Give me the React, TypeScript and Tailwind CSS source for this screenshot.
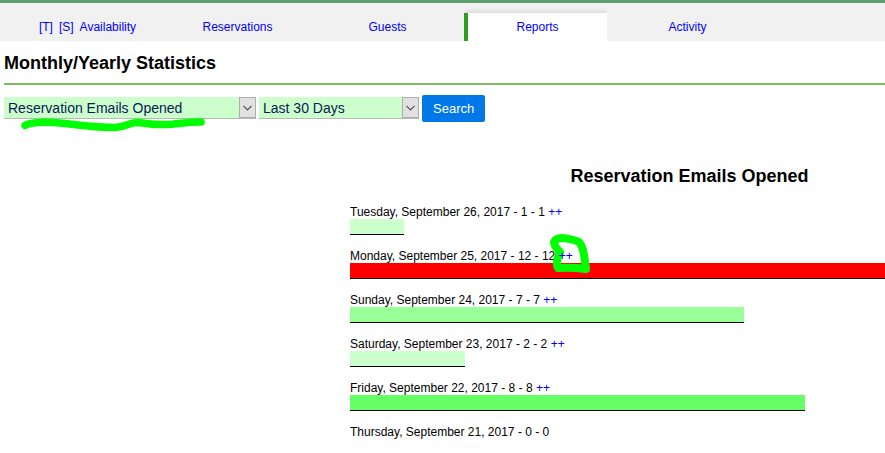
import { useState } from 'react';
import type { ReactNode } from 'react';

const TABS = ['Availability', 'Reservations', 'Guests', 'Reports', 'Activity'];

const STATS = [
  { day: 'Tuesday, September 26, 2017', count: 1, color: 'bg-[#ccffcc]' },
  { day: 'Monday, September 25, 2017', count: 12, color: 'bg-[#ff0000]', marked: true },
  { day: 'Sunday, September 24, 2017', count: 7, color: 'bg-[#99ff99]' },
  { day: 'Saturday, September 23, 2017', count: 2, color: 'bg-[#ccffcc]' },
  { day: 'Friday, September 22, 2017', count: 8, color: 'bg-[#66ff66]' },
  { day: 'Thursday, September 21, 2017', count: 0, color: 'bg-white' },
];

const MAX_COUNT = Math.max(...STATS.map((stat) => stat.count));

function NavTab({ label, active }: { label: string; active: boolean }) {
  return (
    <li
      className={`flex h-7 w-[143px] items-center justify-center gap-1.5 border-l-4 ${
        active
          ? 'border-[#2ca01c] bg-white shadow-[0_-1px_5px_rgba(0,0,0,0.14)] [clip-path:inset(-6px_0_0_0)]'
          : 'border-transparent'
      }`}
    >
      {label === 'Availability' && (
        <>
          <a href="#today">[T]</a>
          <a href="#search">[S]</a>
        </>
      )}
      <a href={`#${label.toLowerCase()}`}>{label}</a>
    </li>
  );
}

interface SelectBoxProps {
  label: string;
  options: string[];
  className: string;
  children?: ReactNode;
}

function SelectBox({ label, options, className, children }: SelectBoxProps) {
  const [value, setValue] = useState(options[0]);

  return (
    <div className={`relative pb-px ${className}`}>
      <select
        aria-label={label}
        value={value}
        onChange={(e) => setValue(e.target.value)}
        className="block h-[22px] w-full appearance-none border-b border-[#b8b8b8] bg-[#ccffcc] pt-px pr-5 pl-1 text-sm text-[#0a1a55]"
      >
        {options.map((option) => (
          <option key={option}>{option}</option>
        ))}
      </select>
      <span className="pointer-events-none absolute top-0 right-0 flex h-[21px] w-[17px] items-center justify-center border border-[#adadad] bg-[#e1e1e1]">
        <svg width="9" height="6" viewBox="0 0 9 6" fill="none" stroke="#505050" strokeWidth="1.2">
          <path d="M0.5 0.8 L4.5 4.8 L8.5 0.8" />
        </svg>
      </span>
      {children}
    </div>
  );
}

function Underline() {
  return (
    <svg
      className="pointer-events-none absolute top-5 left-4"
      width="190"
      height="16"
      viewBox="0 0 190 16"
      fill="none"
      stroke="#00ff00"
      strokeWidth="7.5"
      strokeLinecap="round"
      strokeLinejoin="round"
    >
      <path d="M5 8.5 C12 4.5 30 5 45 6.5 C60 8 76 10.5 95 10.5 C106 10.5 108 5.5 117 5.5 C126 6 132 8 145 7.5 C158 7 170 4.5 181 5" />
    </svg>
  );
}

function Circle() {
  return (
    <svg
      className="pointer-events-none absolute -top-4 -left-2.5"
      width="44"
      height="44"
      viewBox="0 0 44 44"
      fill="none"
      stroke="#00ff00"
      strokeWidth="8"
      strokeLinecap="round"
      strokeLinejoin="round"
    >
      <path d="M11 19 Q5 13 5 9 Q7 5 13 5 Q24 6 30 9 Q34 14 35 22 L37 36 Q22 34 9 35 Q6 29 11 19" />
    </svg>
  );
}

export default function App() {
  return (
    <div className="overflow-x-hidden bg-white font-['Liberation_Sans',Arial,sans-serif] text-xs text-black">
      <nav className="border-t-[3px] border-[#5da06f] bg-[#f1f1f1] pt-2.5 pl-3.5">
        <ul className="flex gap-[7px] text-[#0000ff]">
          {TABS.map((tab) => (
            <NavTab key={tab} label={tab} active={tab === 'Reports'} />
          ))}
        </ul>
      </nav>

      <main className="pl-1">
        <h1 className="border-b-2 border-[#7fba5f] pt-[11px] pb-[9px] text-lg leading-[22px] font-bold">
          Monthly/Yearly Statistics
        </h1>

        <form className="flex items-center gap-[3px] pt-2.5" onSubmit={(e) => e.preventDefault()}>
          <SelectBox
            label="Report"
            options={['Reservation Emails Opened', 'Reservations']}
            className="w-[252px]"
          >
            <Underline />
          </SelectBox>
          <SelectBox label="Period" options={['Last 30 Days', 'Last Year']} className="w-40" />
          <button
            type="submit"
            className="h-[27px] rounded-xs bg-[#0078e7] px-[11px] text-[13px] text-white"
          >
            Search
          </button>
        </form>

        <section className="ml-[346px] min-w-[679px] pt-[43px]">
          <h2 className="pb-[17px] text-center text-lg leading-[23px] font-bold">
            Reservation Emails Opened
          </h2>
          <ul className="flex flex-col gap-3.5">
            {STATS.map(({ day, count, color, marked }) => (
              <li key={day}>
                <p className="leading-[14px]">
                  {day} - {count} - {count}{' '}
                  {count > 0 && (
                    <span className="relative">
                      {marked && <Circle />}
                      <a href="#details" className="relative text-[#0000ff]">
                        ++
                      </a>
                    </span>
                  )}
                </p>
                {count > 0 && (
                  <div
                    className={`h-4 border-b border-black ${color}`}
                    style={{ width: `${Math.round((count / MAX_COUNT) * 100)}%` }}
                  />
                )}
              </li>
            ))}
          </ul>
        </section>
      </main>
    </div>
  );
}
